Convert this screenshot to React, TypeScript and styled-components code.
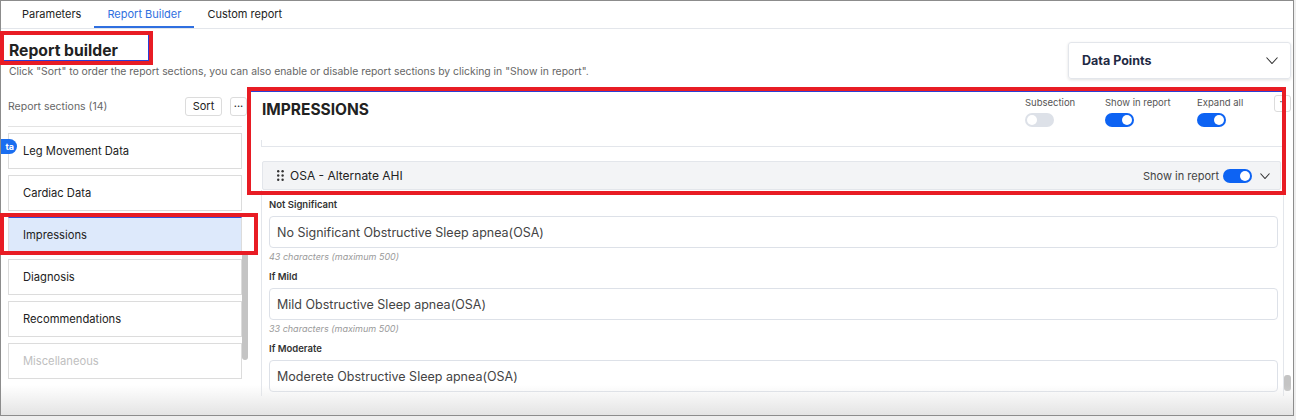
import React from 'react'
import styled, { createGlobalStyle } from 'styled-components'

const GlobalStyle = createGlobalStyle`
  html, body {
    margin: 0;
    padding: 0;
    background: #eeeeee;
  }
  * {
    box-sizing: border-box;
  }
  body {
    font-family: Inter, "Noto Sans", sans-serif;
    color: #222;
  }
`

const Page = styled.div`
  position: relative;
  width: 1296px;
  height: 420px;
  overflow: hidden;
`

const Frame = styled.div`
  position: relative;
  width: 1294px;
  height: 416px;
  border: 1px solid #8c8c8c;
  background: #fff;
  overflow: hidden;
`

const TabBar = styled.div`
  display: flex;
  height: 28px;
  padding-left: 8px;
  border-bottom: 1px solid #e3e6eb;
`

const Tab = styled.div<{ $active?: boolean }>`
  padding: 0 13px;
  font-size: 11px;
  line-height: 26px;
  color: ${p => (p.$active ? '#2f6fe0' : '#222')};
  border-bottom: 2px solid ${p => (p.$active ? '#2f6fe0' : 'transparent')};
`

const Header = styled.div`
  display: flex;
  justify-content: space-between;
  align-items: flex-start;
  height: 64px;
  padding: 0 2px 0 8px;
`

const TitleBlock = styled.div`
  padding-top: 12px;
`

const Title = styled.h1`
  margin: 0;
  font-size: 15.7px;
  line-height: 20px;
  font-weight: 700;
  color: #222;
`

const Desc = styled.p`
  margin: 4px 0 0;
  font-size: 10.4px;
  line-height: 14px;
  color: #666;
`

const DataPoints = styled.div`
  display: flex;
  align-items: center;
  justify-content: space-between;
  width: 223px;
  height: 37px;
  margin-top: 13px;
  padding: 0 12px 0 13px;
  border: 1px solid #e3e6eb;
  border-radius: 3px;
  box-shadow: 0 1px 3px rgba(0, 0, 0, 0.12);
  font-size: 12.5px;
  font-weight: 700;
  color: #1f2a44;
`

const Main = styled.div`
  display: flex;
  gap: 13px;
  padding: 0 2px 0 7px;
`

const LeftCol = styled.div`
  width: 240px;
  flex-shrink: 0;
`

const SectionsHead = styled.div`
  display: flex;
  align-items: center;
  height: 19px;
  margin-top: 4px;
  padding-right: 1px;
`

const SectionsLabel = styled.span`
  flex: 1;
  font-size: 10.5px;
  color: #666;
`

const SmallButton = styled.button<{ $w: number }>`
  width: ${p => p.$w}px;
  height: 19px;
  margin-left: 8px;
  padding: 0;
  border: 1px solid #dcdcdc;
  border-radius: 3px;
  background: #fff;
  font-family: inherit;
  font-size: 11px;
  color: #222;
  line-height: 15px;
`

const Divider = styled.div`
  height: 1px;
  margin: 10px 6px 6px 0;
  background: #e3e3e3;
`

const List = styled.div`
  position: relative;
  display: flex;
  height: 252px;
`

const Items = styled.div`
  display: flex;
  flex-direction: column;
  gap: 6px;
  width: 234px;
`

const Item = styled.div<{ $selected?: boolean; $muted?: boolean }>`
  height: 36px;
  flex-shrink: 0;
  display: flex;
  align-items: center;
  padding-left: 14px;
  border: 1px solid #dcdcdc;
  border-top-color: ${p => (p.$selected ? '#3550d8' : '#dcdcdc')};
  background: ${p => (p.$selected ? '#dde9fb' : '#fff')};
  font-size: 11.2px;
  color: ${p => (p.$muted ? '#c0c0c0' : '#222')};
`

const Track = styled.div<{ $top: number; $w: number }>`
  width: ${p => p.$w}px;
  padding-top: ${p => p.$top}px;
  flex-shrink: 0;
`

const Thumb = styled.div<{ $h: number }>`
  height: ${p => p.$h}px;
  border-radius: 3px;
  background: #c4c4c4;
`

const Badge = styled.span`
  position: absolute;
  left: -8px;
  top: 6px;
  width: 17px;
  height: 15px;
  padding-right: 3px;
  border-radius: 0 8px 8px 0;
  background: #1a6ef0;
  color: #fff;
  font-size: 9px;
  font-weight: 700;
  line-height: 15px;
  text-align: right;
`

const RightCol = styled.div`
  flex: 1;
  display: flex;
  flex-direction: column;
`

const SectionHeader = styled.div`
  display: flex;
  align-items: flex-start;
  height: 47px;
`

const SectionTitle = styled.h2`
  flex: 1;
  margin: 7px 0 0 1px;
  font-size: 15.5px;
  line-height: 20px;
  font-weight: 700;
  color: #222;
`

const Control = styled.div<{ $w: number }>`
  width: ${p => p.$w}px;
  display: flex;
  flex-direction: column;
  align-items: flex-start;
  gap: 4px;
  margin-top: 3px;
  font-size: 9.5px;
  line-height: 13px;
  color: #555;
`

const Toggle = styled.span<{ $on?: boolean }>`
  position: relative;
  display: inline-block;
  width: 29px;
  height: 14px;
  border-radius: 7px;
  background: ${p => (p.$on ? '#0d63f3' : '#dde1e8')};
  flex-shrink: 0;
  &::after {
    content: '';
    position: absolute;
    top: 2px;
    left: ${p => (p.$on ? '17px' : '2px')};
    width: 10px;
    height: 10px;
    border-radius: 50%;
    background: #fff;
  }
`

const MoreButton = styled.div`
  width: 17px;
  height: 17px;
  margin-top: 2px;
  border: 1px solid #dcdcdc;
  border-radius: 3px;
  font-size: 10px;
  line-height: 10px;
  text-align: center;
  color: #333;
`

const CardEdge = styled.div`
  height: 7px;
  margin-right: 7px;
  border-left: 1px solid #e3e6eb;
  border-bottom: 1px solid #e3e6eb;
`

const SubBar = styled.div`
  display: flex;
  align-items: center;
  height: 29px;
  margin: 14px 10px 0 1px;
  padding: 0 10px 0 14px;
  border: 1px solid #e3e6eb;
  border-radius: 2px;
  background: #f3f4f6;
`

const SubTitle = styled.span`
  flex: 1;
  display: flex;
  align-items: center;
  gap: 6px;
  font-size: 12px;
  color: #222;
`

const SubShow = styled.span`
  display: flex;
  align-items: center;
  gap: 4px;
  margin-right: 8px;
  font-size: 11px;
  color: #444;
`

const FieldsArea = styled.div`
  display: flex;
  height: 206px;
  overflow: hidden;
`

const Fields = styled.div`
  flex: 1;
  padding: 8px 5px 0 7px;
  border-left: 1px solid #e3e6eb;
  border-right: 1px solid #e3e6eb;
`

const Field = styled.div`
  margin-bottom: 7px;
`

const FieldLabel = styled.div`
  font-size: 9.5px;
  line-height: 13px;
  font-weight: 600;
  color: #333;
  margin-bottom: 5px;
`

const Input = styled.div`
  height: 32px;
  display: flex;
  align-items: center;
  padding-left: 7px;
  border: 1px solid #dde1e8;
  border-radius: 4px;
  font-size: 12.5px;
  color: #444;
`

const Helper = styled.div`
  margin-top: 3px;
  font-size: 9px;
  line-height: 12px;
  font-style: italic;
  color: #9a9a9a;
`

const BottomFade = styled.div`
  position: absolute;
  left: 0;
  right: 0;
  bottom: 0;
  height: 30px;
  background: linear-gradient(to bottom, rgba(255, 255, 255, 0), #e4e4e4);
  pointer-events: none;
`

const Mark = styled.div<{ $x: number; $y: number; $w: number; $h: number; $inner: string }>`
  position: absolute;
  left: ${p => p.$x}px;
  top: ${p => p.$y}px;
  width: ${p => p.$w}px;
  height: ${p => p.$h}px;
  border: 4px solid #e81c24;
  box-shadow: ${p => p.$inner};
  pointer-events: none;
`

const Chevron = ({ w, h }: { w: number; h: number }) => (
  <svg width={w} height={h} viewBox={`0 0 ${w} ${h}`} fill="none">
    <path d={`M0.5 0.5 L${w / 2} ${h - 0.5} L${w - 0.5} 0.5`} stroke="#333" strokeWidth="1.1" />
  </svg>
)

const DragDots = () => (
  <svg width="7" height="11" viewBox="0 0 7 11">
    {[0, 1].map(c =>
      [0, 1, 2].map(r => <circle key={`${c}${r}`} cx={1.2 + c * 4.4} cy={1.3 + r * 4.2} r="1.2" fill="#333" />)
    )}
  </svg>
)

const sections = [
  { name: 'Leg Movement Data' },
  { name: 'Cardiac Data' },
  { name: 'Impressions', selected: true },
  { name: 'Diagnosis' },
  { name: 'Recommendations' },
  { name: 'Miscellaneous', muted: true },
]

// the third field's counter is scrolled out of view in the reference
const fields = [
  { label: 'Not Significant', value: 'No Significant Obstructive Sleep apnea(OSA)', count: 43 },
  { label: 'If Mild', value: 'Mild Obstructive Sleep apnea(OSA)', count: 33 },
  { label: 'If Moderate', value: 'Moderete Obstructive Sleep apnea(OSA)' },
]

const App: React.FC = () => {
  return (
    <Page>
      <GlobalStyle />
      <Frame>
        <TabBar>
          <Tab>Parameters</Tab>
          <Tab $active>Report Builder</Tab>
          <Tab>Custom report</Tab>
        </TabBar>

        <Header>
          <TitleBlock>
            <Title>Report builder</Title>
            <Desc>
              Click "Sort" to order the report sections, you can also enable or disable report sections by clicking in "Show in report".
            </Desc>
          </TitleBlock>
          <DataPoints>
            <span>Data Points</span>
            <Chevron w={12} h={7} />
          </DataPoints>
        </Header>

        <Main>
          <LeftCol>
            <SectionsHead>
              <SectionsLabel>Report sections (14)</SectionsLabel>
              <SmallButton $w={37}>Sort</SmallButton>
              <SmallButton $w={17}>···</SmallButton>
            </SectionsHead>
            <Divider />
            <List>
              <Items>
                {sections.map(s => (
                  <Item key={s.name} $selected={s.selected} $muted={s.muted}>
                    {s.name}
                  </Item>
                ))}
              </Items>
              <Track $top={120} $w={6}>
                <Thumb $h={107} />
              </Track>
              <Badge>ta</Badge>
            </List>
          </LeftCol>

          <RightCol>
            <SectionHeader>
              <SectionTitle>IMPRESSIONS</SectionTitle>
              <Control $w={80}>
                Subsection
                <Toggle />
              </Control>
              <Control $w={92}>
                Show in report
                <Toggle $on />
              </Control>
              <Control $w={77}>
                Expand all
                <Toggle $on />
              </Control>
              <MoreButton>··</MoreButton>
            </SectionHeader>
            <CardEdge />
            <SubBar>
              <SubTitle>
                <DragDots />
                OSA - Alternate AHI
              </SubTitle>
              <SubShow>
                Show in report
                <Toggle $on />
              </SubShow>
              <Chevron w={10} h={6} />
            </SubBar>
            <FieldsArea>
              <Fields>
                {fields.map(f => (
                  <Field key={f.label}>
                    <FieldLabel>{f.label}</FieldLabel>
                    <Input>{f.value}</Input>
                    {f.count && <Helper>{f.count} characters (maximum 500)</Helper>}
                  </Field>
                ))}
              </Fields>
              <Track $top={185} $w={7}>
                <Thumb $h={16} />
              </Track>
            </FieldsArea>
          </RightCol>
        </Main>
        <BottomFade />
      </Frame>

      <Mark $x={0} $y={31} $w={153} $h={34} $inner="inset -1px -1px 0 #2b3fd6" />
      <Mark $x={0} $y={213} $w={258} $h={42} $inner="none" />
      <Mark $x={247} $y={87} $w={1039} $h={108} $inner="inset 0 1px 0 #2b3fd6" />
    </Page>
  )
}

export default App
